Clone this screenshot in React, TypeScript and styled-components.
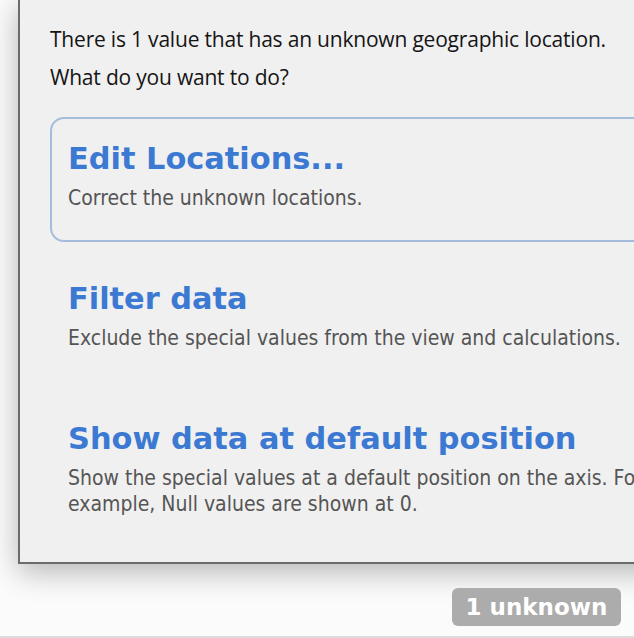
import React from "react";
import styled, { createGlobalStyle } from "styled-components";

const GlobalStyle = createGlobalStyle`
  html, body {
    margin: 0;
    padding: 0;
    background: #fbfbfb;
  }
`;

const options = [
  { title: "Edit Locations...", text: "Correct the unknown locations.", selected: true },
  { title: "Filter data", text: "Exclude the special values from the view and calculations.", selected: false },
  {
    title: "Show data at default position",
    text: "Show the special values at a default position on the axis. For example, Null values are shown at 0.",
    selected: false,
  },
];

const App = () => {
  return (
    <>
      <GlobalStyle />
      <Screen>
        <Dialog>
          <Intro>There is 1 value that has an unknown geographic location.</Intro>
          <Intro>What do you want to do?</Intro>
          <OptionList>
            {options.map((o) => (
              <Option key={o.title} selected={o.selected}>
                <OptionTitle>{o.title}</OptionTitle>
                <OptionText>{o.text}</OptionText>
              </Option>
            ))}
          </OptionList>
        </Dialog>

        <Footer>
          <UnknownPill>1 unknown</UnknownPill>
        </Footer>
        <BottomRule />
      </Screen>
    </>
  );
};

const Screen = styled.div`
  width: 634px;
  height: 638px;
  overflow: hidden;
  position: relative;
  background: #fbfbfb;
  display: flex;
  flex-direction: column;
`;

const Dialog = styled.div`
  box-sizing: border-box;
  margin-top: -2px;
  margin-left: 18px;
  width: 680px;
  height: 566px;
  flex-shrink: 0;
  background: #f0f0f0;
  border: 2px solid #6b6b6b;
  box-shadow: 0 8px 28px rgba(0, 0, 0, 0.28);
  padding: 20px 0 0 30px;
  display: flex;
  flex-direction: column;
`;

const Intro = styled.p`
  margin: 0;
  font-family: "Open Sans", "Noto Sans", sans-serif;
  font-size: 21px;
  letter-spacing: -0.2px;
  line-height: 38px;
  color: #151515;
`;

const OptionList = styled.div`
  margin-top: 21px;
  display: flex;
  flex-direction: column;
  gap: 15px;
`;

const Option = styled.div<{ selected: boolean }>`
  width: 640px;
  box-sizing: border-box;
  padding: 17px 16px 29px 16px;
  border: 2px solid ${(p) => (p.selected ? "#a5bddc" : "transparent")};
  border-radius: 14px;
`;

const OptionTitle = styled.div`
  font-family: "DejaVu Sans", Verdana, sans-serif;
  font-weight: bold;
  font-size: 30.4px;
  line-height: 46px;
  color: #3b79d2;
`;

const OptionText = styled.div`
  margin-top: 3px;
  width: 610px;
  font-family: "DejaVu Sans Condensed", "DejaVu Sans", sans-serif;
  font-stretch: condensed;
  font-size: 21px;
  line-height: 26px;
  color: #555555;
`;

const Footer = styled.div`
  flex: 1;
  display: flex;
  justify-content: flex-end;
  align-items: flex-start;
  padding: 24px 13px 0 0;
`;

const UnknownPill = styled.div`
  width: 169px;
  height: 38px;
  box-sizing: border-box;
  border-radius: 6px;
  background: #acacac;
  color: #ffffff;
  font-family: "DejaVu Sans", Verdana, sans-serif;
  font-weight: bold;
  font-size: 23px;
  display: flex;
  align-items: center;
  justify-content: center;
`;

const BottomRule = styled.div`
  height: 2px;
  background: #dcdcdc;
  flex-shrink: 0;
`;

export default App;
